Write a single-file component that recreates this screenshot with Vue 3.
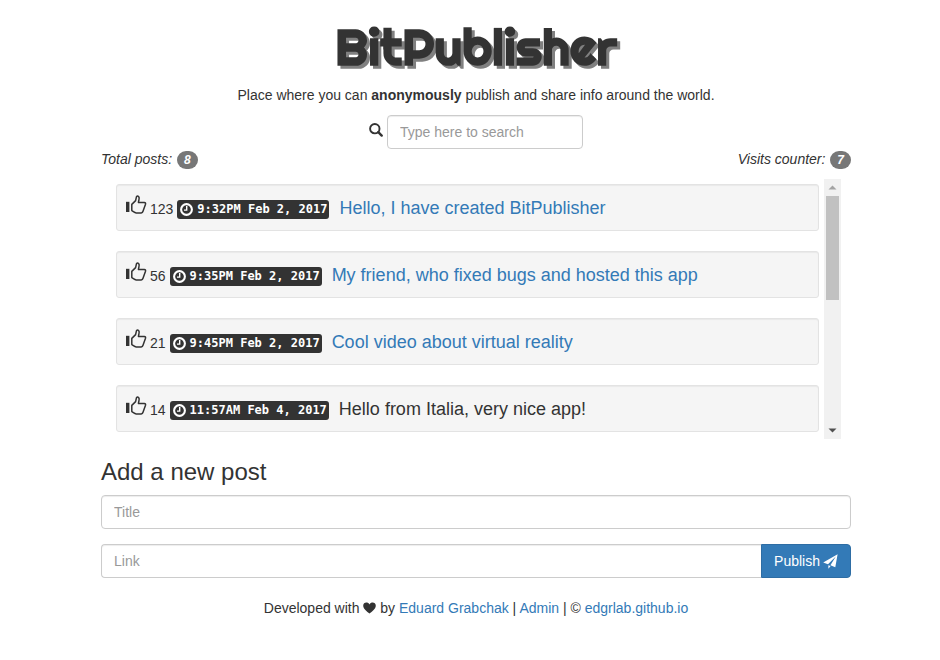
<script setup>
import { ref } from 'vue'

const search = ref('')
const title = ref('')
const link = ref('')
const postCount = 8
const visits = 7

const posts = ref([
  { likes: 123, date: '9:32PM Feb 2, 2017', title: 'Hello, I have created BitPublisher', href: '#' },
  { likes: 56, date: '9:35PM Feb 2, 2017', title: 'My friend, who fixed bugs and hosted this app', href: '#' },
  { likes: 21, date: '9:45PM Feb 2, 2017', title: 'Cool video about virtual reality', href: '#' },
  { likes: 14, date: '11:57AM Feb 4, 2017', title: 'Hello from Italia, very nice app!', href: null }
])
</script>

<template>
  <div class="page">
    <div class="container">
      <header>
        <h1>BitPublisher</h1>
        <p class="lead">Place where you can <b>anonymously</b> publish and share info around the world.</p>
        <div class="search">
          <label for="search" aria-label="Search">
            <svg width="14" height="14" viewBox="0 0 14 14">
              <circle cx="5.8" cy="5.7" r="4.7" fill="none" stroke="#333" stroke-width="1.9" />
              <path d="M9.3 9.2L12.7 12.6" stroke="#333" stroke-width="2.4" stroke-linecap="round" />
            </svg>
          </label>
          <input id="search" v-model="search" class="control" type="text" placeholder="Type here to search">
        </div>
      </header>

      <div class="stats">
        <i>Total posts: <span class="badge">{{ postCount }}</span></i>
        <i>Visits counter: <span class="badge">{{ visits }}</span></i>
      </div>

      <main class="feed">
        <ul class="posts">
          <li v-for="post in posts" :key="post.date" class="post">
            <button class="like" type="button" aria-label="Like" @click="post.likes++">
              <svg width="21" height="20" viewBox="0 0 21 20">
                <path d="M0 6.8H3.4V17H0Z" fill="#333" />
                <path d="M5.8 9.4L9.6 5.6L10.5 1.6Q11.4 0.5 12.6 1.6Q13.6 2.8 12.9 5L12.4 7.4H18.3Q19.9 7.7 19.5 9.3L17 16.3Q16.6 17.8 15.2 17.9H10.2Q8.9 17.8 7.8 16.9L5.8 15.6Z" fill="none" stroke="#333" stroke-width="1.5" stroke-linejoin="round" />
              </svg>
            </button>
            <span class="likes">{{ post.likes }}</span>
            <span class="stamp">
              <svg width="13" height="13" viewBox="0 0 13 13">
                <circle cx="6.5" cy="6.5" r="5.4" fill="none" stroke="#fff" stroke-width="2.1" />
                <path d="M6.7 3V7.1H4" fill="none" stroke="#fff" stroke-width="1.4" />
              </svg>
              <time>{{ post.date }}</time>
            </span>
            <a v-if="post.href" class="title" :href="post.href">{{ post.title }}</a>
            <span v-else class="title">{{ post.title }}</span>
          </li>
        </ul>
        <div class="scrollbar">
          <button type="button" aria-label="Scroll up">
            <svg width="9" height="5" viewBox="0 0 9 5"><path d="M0.5 4.5L4.5 0.5L8.5 4.5Z" fill="#a3a3a3" /></svg>
          </button>
          <div class="track"><div class="thumb"></div></div>
          <button type="button" aria-label="Scroll down">
            <svg width="9" height="5" viewBox="0 0 9 5"><path d="M0.5 0.5L4.5 4.5L8.5 0.5Z" fill="#505050" /></svg>
          </button>
        </div>
      </main>

      <h2>Add a new post</h2>
      <form @submit.prevent>
        <input v-model="title" class="control" type="text" placeholder="Title" aria-label="Title">
        <div class="group">
          <input v-model="link" class="control" type="text" placeholder="Link" aria-label="Link">
          <button class="publish" type="submit">
            Publish
            <svg width="15" height="15" viewBox="0 0 15 15">
              <path d="M14.6 0.2L12.3 13.2L7.4 11.2L12.8 2.6L5 10.3L0.2 8.6Z" fill="#fff" />
              <path d="M5.4 11.2L7.6 12.1L5.4 14.8Z" fill="#fff" />
            </svg>
          </button>
        </div>
      </form>

      <footer>
        Developed with
        <svg class="heart" width="13" height="12" viewBox="0 0 13 12">
          <path d="M6.5 11.6C4 9.4 0.2 6.7 0.2 3.7C0.2 0 5 -0.5 6.5 2.5C8 -0.5 12.8 0 12.8 3.7C12.8 6.7 9 9.4 6.5 11.6Z" fill="#333" />
        </svg>
        by <a href="#">Eduard Grabchak</a> | <a href="#">Admin</a> | © <a href="#">edgrlab.github.io</a>
      </footer>
    </div>
  </div>
</template>

<style>
body {
  background: #fff;
}
</style>

<style scoped>
* {
  box-sizing: border-box;
}
.page {
  padding: 20px 0 20px 12px;
  color: #333;
  font: 14px/20px "Liberation Sans", Arial, sans-serif;
}
.container {
  max-width: 750px;
  margin: 0 auto;
}
header {
  text-align: center;
}
h1 {
  margin: 0 0 11px;
  font: 700 50px/54px Righteous, Lato, sans-serif;
  text-shadow: 3px 3px 0 #808080;
}
.lead {
  margin: 0 0 10px;
}
.search {
  display: flex;
  justify-content: center;
  align-items: center;
  gap: 4px;
}
.search label {
  display: flex;
  padding-bottom: 4px;
}
.search .control {
  width: 196px;
}
.control {
  display: block;
  width: 100%;
  height: 34px;
  padding: 6px 12px;
  border: 1px solid #ccc;
  border-radius: 4px;
  background: #fff;
  box-shadow: inset 0 1px 1px rgba(0, 0, 0, 0.075);
  color: #555;
  font: inherit;
}
.control::placeholder {
  color: #999;
  opacity: 1;
}
.stats {
  display: flex;
  justify-content: space-between;
}
.badge {
  display: inline-block;
  min-width: 10px;
  margin-left: 1px;
  padding: 3px 7px;
  border-radius: 10px;
  background: #777;
  color: #fff;
  font-size: 12px;
  font-weight: bold;
  line-height: 12px;
  text-align: center;
}
.feed {
  display: flex;
  gap: 5px;
  margin: 10px 10px 0 0;
}
.posts {
  display: flex;
  flex: 1;
  flex-direction: column;
  gap: 20px;
  margin: 0;
  padding: 5px 0 7px 15px;
  list-style: none;
}
.post {
  display: flex;
  align-items: baseline;
  height: 47px;
  padding: 10px 9px 11px;
  border: 1px solid #e3e3e3;
  border-radius: 3px;
  background: #f5f5f5;
  box-shadow: inset 0 1px 1px rgba(0, 0, 0, 0.05);
}
.like {
  padding: 0;
  border: 0;
  background: none;
  line-height: 20px;
  cursor: pointer;
}
.like svg {
  vertical-align: -1px;
}
.likes {
  margin: 0 4px 0 3px;
}
.stamp {
  display: flex;
  align-items: center;
  align-self: flex-end;
  gap: 4px;
  height: 19px;
  padding: 0 2px 0 3px;
  border-radius: 3px;
  background: #333;
  color: #fff;
  font: bold 12px/19px "DejaVu Sans Mono", monospace;
  white-space: nowrap;
}
.title {
  margin-left: 10px;
  font-size: 18px;
}
a {
  color: #337ab7;
  text-decoration: none;
}
.scrollbar {
  display: flex;
  flex-direction: column;
  width: 17px;
  background: #f1f1f1;
}
.scrollbar button {
  display: flex;
  align-items: center;
  justify-content: center;
  height: 17px;
  padding: 0;
  border: 0;
  background: none;
}
.track {
  flex: 1;
  padding: 0 2px;
}
.thumb {
  height: 46%;
  background: #c1c1c1;
}
h2 {
  margin: 20px 0 10px;
  font-size: 24px;
  font-weight: normal;
  line-height: 26px;
}
form {
  display: flex;
  flex-direction: column;
  gap: 15px;
}
.group {
  display: flex;
}
.group .control {
  flex: 1;
  border-right: 0;
  border-radius: 4px 0 0 4px;
}
.publish {
  display: flex;
  align-items: center;
  gap: 3px;
  padding: 0 12px;
  border: 1px solid #2e6da4;
  border-radius: 0 4px 4px 0;
  background: #337ab7;
  color: #fff;
  font: inherit;
  cursor: pointer;
}
footer {
  margin-top: 20px;
  text-align: center;
}
.heart {
  vertical-align: -1px;
}
</style>
